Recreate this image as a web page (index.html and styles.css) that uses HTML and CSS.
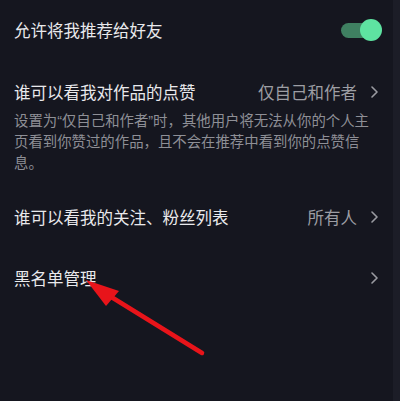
FILE: index.html
```html
<!DOCTYPE html>
<html lang="zh-CN">
<head>
<meta charset="utf-8">
<link rel="stylesheet" href="styles.css">
</head>
<body>
<div class="page">
  <div class="list">
    <div class="row row-toggle">
      <span class="label">允许将我推荐给好友</span>
      <span class="toggle"><span class="knob"></span></span>
    </div>
    <div class="group">
      <div class="row row-head">
        <span class="label">谁可以看我对作品的点赞</span>
        <span class="value">仅自己和作者</span>
        <svg class="chev" width="7" height="12" viewBox="0 0 7 12"><polyline points="1,1 6,6 1,11" fill="none" stroke="#9a9ba1" stroke-width="1.6" stroke-linecap="round" stroke-linejoin="round"/></svg>
      </div>
      <p class="desc">设置为“仅自己和作者”时，其他用户将无法从你的个人主<br>页看到你赞过的作品，且不会在推荐中看到你的点赞信<br>息。</p>
    </div>
    <div class="row row-follow">
      <span class="label">谁可以看我的关注、粉丝列表</span>
      <span class="value">所有人</span>
      <svg class="chev" width="7" height="12" viewBox="0 0 7 12"><polyline points="1,1 6,6 1,11" fill="none" stroke="#9a9ba1" stroke-width="1.6" stroke-linecap="round" stroke-linejoin="round"/></svg>
    </div>
    <div class="row row-black">
      <span class="label">黑名单管理</span>
      <svg class="chev" width="7" height="12" viewBox="0 0 7 12"><polyline points="1,1 6,6 1,11" fill="none" stroke="#9a9ba1" stroke-width="1.6" stroke-linecap="round" stroke-linejoin="round"/></svg>
    </div>
  </div>
  <div class="edge"></div>
  <svg class="arrow" width="400" height="401" viewBox="0 0 400 401">
    <line x1="202" y1="353" x2="100" y2="290" stroke="#e8141a" stroke-width="4.5" stroke-linecap="round"/>
    <polygon points="86,280 119,291 106,306" fill="#e8141a"/>
  </svg>
</div>
</body>
</html>
```
FILE: styles.css
```css
html, body {
  margin: 0;
  padding: 0;
  background: #15161f;
}
.page {
  position: relative;
  width: 400px;
  height: 401px;
  display: flex;
  background: #15161f;
  font-family: "Noto Sans CJK SC", "Noto Sans", sans-serif;
  overflow: hidden;
}
.list {
  flex: 1;
  display: flex;
  flex-direction: column;
}
.edge {
  width: 7px;
  background: #1c1d27;
}
.row {
  display: flex;
  align-items: center;
  padding: 0 15px 0 14px;
  color: #e9e9ec;
  font-size: 16.5px;
  line-height: 24px;
}
.label {
  flex: 1;
  white-space: nowrap;
}
.value {
  color: #9d9ea4;
  margin-right: 14px;
  white-space: nowrap;
}
.chev {
  display: block;
}
.row-toggle {
  height: 60px;
  padding-right: 11px;
}
.toggle {
  position: relative;
  width: 41px;
  height: 22px;
  display: block;
}
.toggle::before {
  content: "";
  position: absolute;
  left: 0;
  top: 4px;
  width: 36px;
  height: 15px;
  border-radius: 8px;
  background: #3f8061;
}
.knob {
  position: absolute;
  right: 0;
  top: 0;
  width: 22px;
  height: 22px;
  border-radius: 50%;
  background: #5ee3a1;
}
.group {
  padding-top: 20px;
}
.row-head {
  height: 24px;
}
.desc {
  margin: 7px 0 0 14px;
  color: #8e8f96;
  font-family: "Liberation Sans", "Noto Sans CJK SC", sans-serif;
  font-size: 14.4px;
  line-height: 21px;
  width: 370px;
  white-space: nowrap;
}
.row-follow {
  margin-top: 31px;
  height: 24px;
}
.row-black {
  margin-top: 37px;
  height: 24px;
}
.arrow {
  position: absolute;
  left: 0;
  top: 0;
  pointer-events: none;
}
```
